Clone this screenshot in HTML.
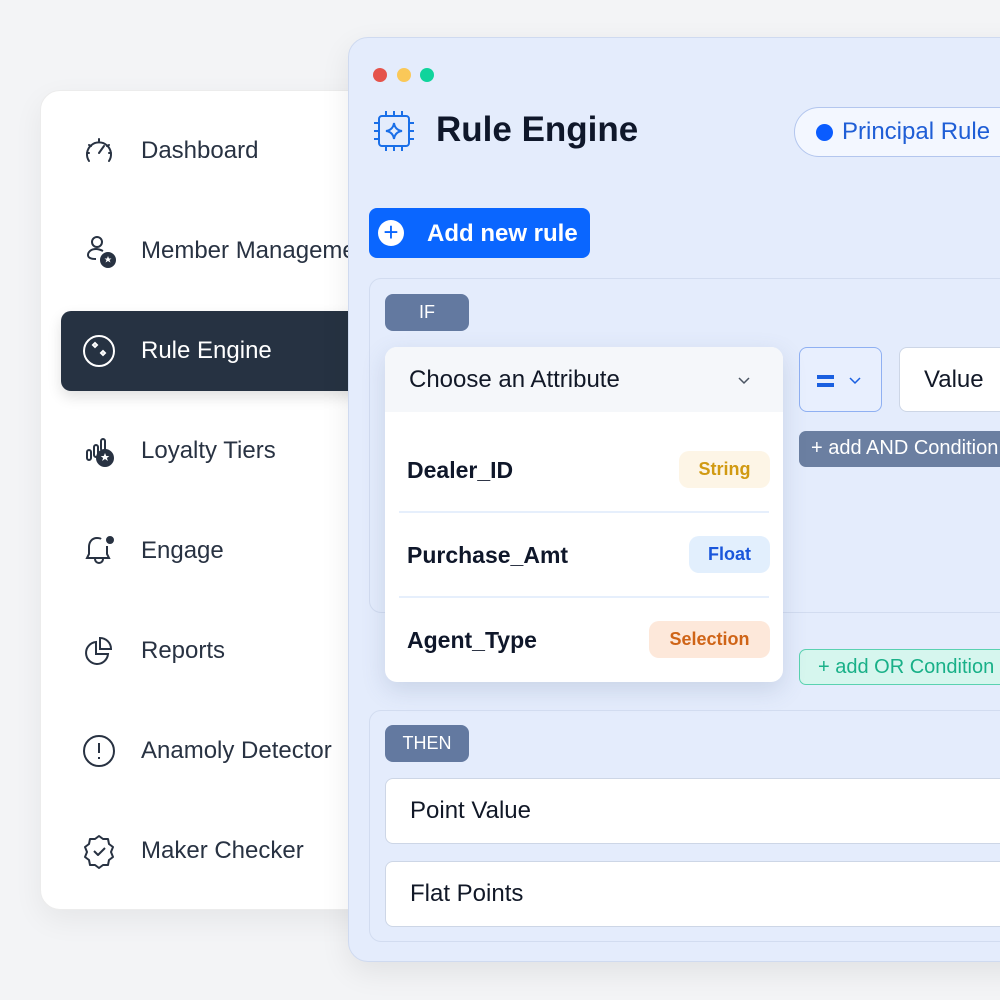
<!DOCTYPE html>
<html><head><meta charset="utf-8"><style>
*{box-sizing:border-box;margin:0;padding:0}
body{width:1000px;height:1000px;overflow:hidden;background:#f3f4f6;font-family:"Liberation Sans",sans-serif;position:relative;color:#1f2937}
.abs{position:absolute}
.side{left:40px;top:90px;width:340px;height:820px;background:#fff;border-radius:20px;box-shadow:0 10px 30px rgba(0,0,0,.06);border:1px solid #ececec}
.item{position:absolute;left:20px;width:320px;height:80px;display:flex;align-items:center;font-size:24px;color:#283242}
.item svg{position:absolute;left:20px;top:22px}
.item span{position:absolute;left:80px;white-space:nowrap}
.act{background:#263242;color:#fff;border-radius:10px;box-shadow:0 6px 14px rgba(0,0,0,.12)}
.main{left:348px;top:37px;width:700px;height:925px;background:#e4ecfc;border-radius:20px;border:1px solid #cfdaf0;box-shadow:0 10px 30px rgba(0,0,0,.08);overflow:hidden}
.badge{background:#6379a0;color:#fff;font-size:18px;border-radius:8px;display:flex;align-items:center;justify-content:center}
.inp{background:#fff;border:1px solid #cdd6e6;border-radius:8px;font-size:24px;color:#111827;display:flex;align-items:center;padding-left:24px}
.row{position:absolute;left:22px;font-size:23px;font-weight:bold;color:#0f172a}
.tag{position:absolute;right:13px;height:37px;border-radius:10px;font-size:18px;font-weight:bold;display:flex;align-items:center;justify-content:center}
</style></head><body>
<div class="abs side">
 <div class="item" style="top:20px"><svg width="36" height="36" viewBox="0 0 36 36" fill="none" stroke="#283242" stroke-width="2" stroke-linecap="round"><path d="M8 28A12 12 0 1 1 28 28"/><path d="M18 20l5-7"/><path d="M18 6v2M8 12l2 1M28 12l-2 1M6 20h2M30 20h-2"/></svg><span>Dashboard</span></div>
 <div class="item" style="top:120px"><svg width="36" height="36" viewBox="0 0 36 36" fill="none" stroke="#283242" stroke-width="2"><circle cx="16" cy="9" r="5"/><path d="M22 18c-2-1-4-2-7-2-5 0-8 3-8 6s3 4 8 4"/><circle cx="27" cy="27" r="7" fill="#283242"/><path d="M27 23l1 2.5h2.5l-2 1.5 1 2.5-2.5-1.5-2.5 1.5 1-2.5-2-1.5h2.5z" fill="#fff" stroke="none"/></svg><span>Member Management</span></div>
 <div class="item act" style="top:220px"><svg width="36" height="36" viewBox="0 0 36 36" fill="none" stroke="#fff" stroke-width="2"><circle cx="18" cy="18" r="15"/><path d="M12 12l2-2 2 2-2 2zM20 20l2-2 2 2-2 2z"/></svg><span>Rule Engine</span></div>
 <div class="item" style="top:320px"><svg width="36" height="36" viewBox="0 0 36 36" fill="none" stroke="#283242" stroke-width="2"><rect x="6" y="17" width="4" height="10" rx="2"/><rect x="13" y="12" width="4" height="12" rx="2"/><rect x="20" y="6" width="4" height="12" rx="2"/><circle cx="24" cy="25" r="8" fill="#283242"/><path d="M24 20l1.3 3h3l-2.4 2 1 3-2.9-2-2.9 2 1-3-2.4-2h3z" fill="#fff" stroke="none"/></svg><span>Loyalty Tiers</span></div>
 <div class="item" style="top:420px"><svg width="36" height="36" viewBox="0 0 36 36" fill="none" stroke="#283242" stroke-width="2"><path d="M20 6c-1-1-3-1-4-1-5 0-8 4-8 9v7l-2 4h22l-2-4v-8"/><path d="M14 25v1a4 4 0 0 0 8 0v-1"/><circle cx="29" cy="7" r="3" fill="#283242"/></svg><span>Engage</span></div>
 <div class="item" style="top:520px"><svg width="36" height="36" viewBox="0 0 36 36" fill="none" stroke="#283242" stroke-width="2"><path d="M15 9A11 11 0 1 0 27 21H15z"/><path d="M19 5a11 11 0 0 1 11 11H19z"/></svg><span>Reports</span></div>
 <div class="item" style="top:620px"><svg width="36" height="36" viewBox="0 0 36 36" fill="none" stroke="#283242" stroke-width="2"><circle cx="18" cy="18" r="15"/><path d="M18 10v10M18 24v2"/></svg><span>Anamoly Detector</span></div>
 <div class="item" style="top:720px"><svg width="36" height="36" viewBox="0 0 36 36" fill="none" stroke="#283242" stroke-width="2" stroke-linejoin="round"><path d="M18 3l4 3 5 0 1 5 4 3-2 5 2 5-4 3-1 5-5 0-4 3-4-3-5 0-1-5-4-3 2-5-2-5 4-3 1-5 5 0z"/><path d="M13 18l4 4 7-7"/></svg><span>Maker Checker</span></div>
</div>
<div class="abs main">
 <div class="abs" style="left:24px;top:30px;width:14px;height:14px;border-radius:50%;background:#e5534b"></div>
 <div class="abs" style="left:48px;top:30px;width:14px;height:14px;border-radius:50%;background:#fac858"></div>
 <div class="abs" style="left:71px;top:30px;width:14px;height:14px;border-radius:50%;background:#10d49c"></div>
 <svg class="abs" style="left:22px;top:70px" width="46" height="46" viewBox="0 0 46 46" fill="none" stroke="#1a6fe8" stroke-width="2"><rect x="8" y="8" width="30" height="30" rx="3"/><path d="M15 3v5M23 3v5M31 3v5M15 38v5M23 38v5M31 38v5M3 15h5M3 23h5M3 31h5M38 15h5M38 23h5M38 31h5"/><path d="M23 15q1 7 8 8q-7 1-8 8q-1-7-8-8q7-1 8-8z"/></svg>
 <div class="abs" style="left:87px;top:72px;font-size:35px;font-weight:bold;color:#0f172a">Rule Engine</div>
 <div class="abs" style="left:445px;top:69px;width:300px;height:50px;border:1px solid #b3c6ee;border-radius:25px;background:#f3f7ff"><div class="abs" style="left:21px;top:16px;width:17px;height:17px;border-radius:50%;background:#0a5cff"></div><div class="abs" style="left:47px;top:10px;font-size:24px;color:#1f5ed6;white-space:nowrap">Principal Rule</div></div>
 <div class="abs" style="left:20px;top:170px;width:221px;height:50px;background:#0a66ff;border-radius:8px;color:#fff;font-size:24px;font-weight:bold"><div class="abs" style="left:9px;top:12px;width:26px;height:26px;border-radius:50%;background:#fff;color:#0a66ff;font-size:26px;line-height:24px;text-align:center;font-weight:normal">+</div><div class="abs" style="left:58px;top:12px">Add new rule</div></div>
 <div class="abs" style="left:20px;top:240px;width:700px;height:335px;border:1px solid #d2dcf0;border-radius:12px"></div>
 <div class="abs badge" style="left:36px;top:256px;width:84px;height:37px">IF</div>
 <div class="abs" style="left:450px;top:309px;width:83px;height:65px;border:1px solid #8fb0f2;border-radius:8px;background:#e8effe;color:#1a5fe0"><div class="abs" style="left:17px;top:27px;width:17px;height:4px;background:#1a5fe0"></div><div class="abs" style="left:17px;top:35px;width:17px;height:4px;background:#1a5fe0"></div><svg class="abs" style="left:48px;top:28px" width="14" height="10"><path d="M2 2l5 5 5-5" stroke="#1a5fe0" stroke-width="1.5" fill="none"/></svg></div>
 <div class="abs inp" style="left:550px;top:309px;width:200px;height:65px">Value</div>
 <div class="abs" style="left:450px;top:393px;width:260px;height:36px;background:#6b7fa1;border-radius:7px;color:#fff;font-size:20px;padding:6px 0 0 12px;white-space:nowrap">+ add AND Condition</div>
 <div class="abs" style="left:450px;top:611px;width:260px;height:36px;background:#d6f6ee;border:1px solid #5ad2b0;border-radius:7px;color:#19b088;font-size:20px;padding:6px 0 0 18px;white-space:nowrap">+ add OR Condition</div>
 <div class="abs" style="left:36px;top:309px;width:398px;height:335px;background:#fff;border-radius:12px;box-shadow:0 8px 24px rgba(80,100,140,.18);overflow:hidden">
  <div class="abs" style="left:0;top:0;width:398px;height:65px;background:#f5f7fa;font-size:24px;color:#111827;padding:19px 0 0 24px">Choose an Attribute<svg class="abs" style="left:352px;top:29px" width="14" height="10"><path d="M2 2l5 5 5-5" stroke="#4b5563" stroke-width="1.5" fill="none"/></svg></div>
  <div class="row" style="top:110px">Dealer_ID</div><div class="tag" style="top:104px;width:91px;background:#fdf5e6;color:#d19a12">String</div>
  <div class="abs" style="left:14px;top:164px;width:370px;height:2px;background:#e6effc"></div>
  <div class="row" style="top:195px">Purchase_Amt</div><div class="tag" style="top:189px;width:81px;background:#e2effd;color:#1a56db">Float</div>
  <div class="abs" style="left:14px;top:249px;width:370px;height:2px;background:#e6effc"></div>
  <div class="row" style="top:280px">Agent_Type</div><div class="tag" style="top:274px;width:121px;background:#fde8da;color:#cf6417">Selection</div>
 </div>
 <div class="abs" style="left:20px;top:672px;width:700px;height:232px;border:1px solid #d2dcf0;border-radius:12px"></div>
 <div class="abs badge" style="left:36px;top:687px;width:84px;height:37px">THEN</div>
 <div class="abs inp" style="left:36px;top:740px;width:680px;height:66px">Point Value</div>
 <div class="abs inp" style="left:36px;top:823px;width:680px;height:66px">Flat Points</div>
</div>
</body></html>
